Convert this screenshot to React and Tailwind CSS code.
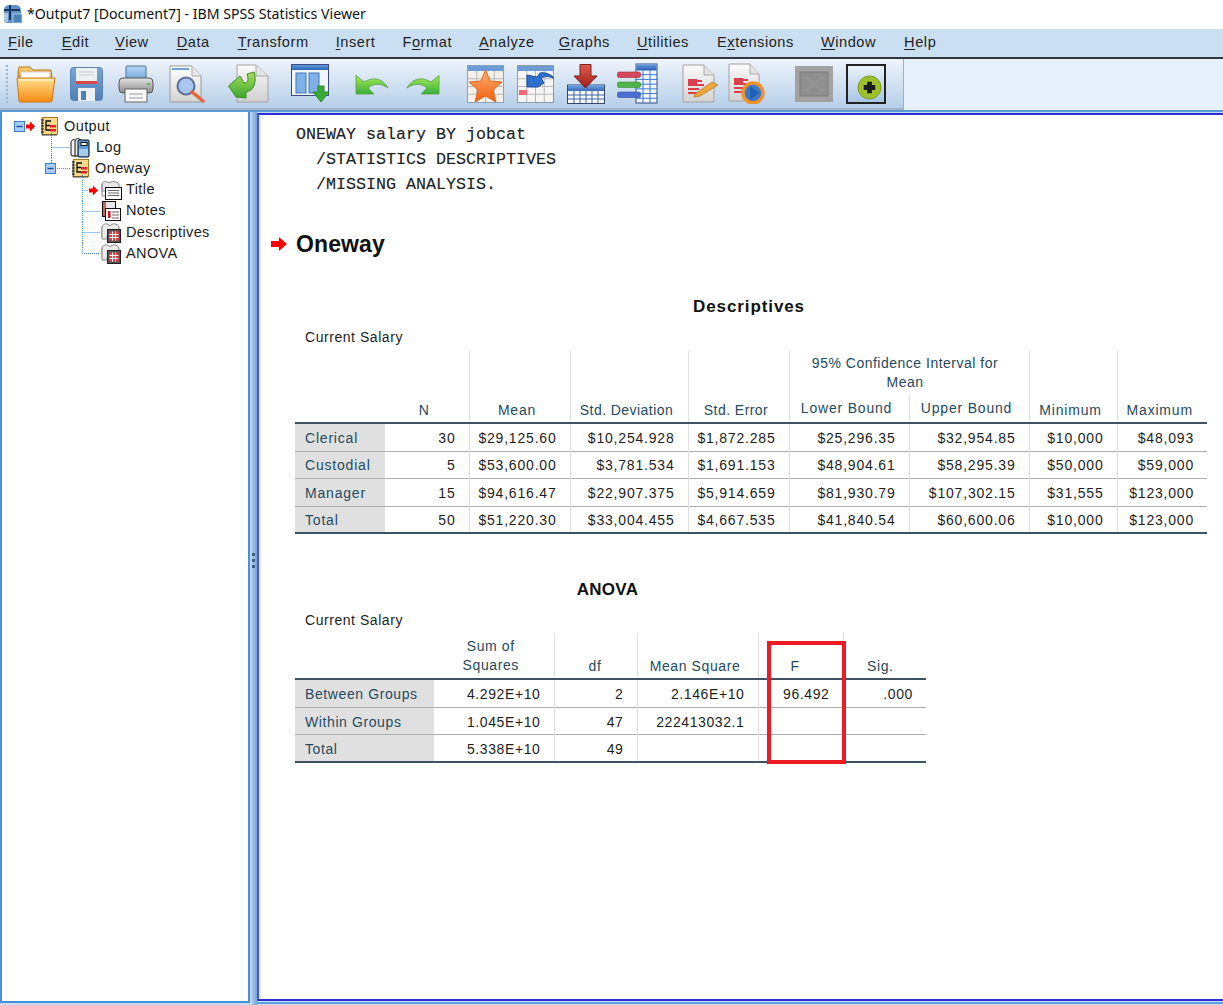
import React from "react";

const Grad = ({ id, a, b, h }) => (
  <linearGradient id={id} x1="0" y1="0" x2={h ? "1" : "0"} y2={h ? "0" : "1"}>
    <stop offset="0" stopColor={a} />
    <stop offset="1" stopColor={b} />
  </linearGradient>
);

const Folder = () => (
  <svg width="40" height="38" viewBox="0 0 40 38" className="shrink-0">
    <defs><Grad id="fo" a="#ffe08a" b="#f58a12" /><Grad id="fb" a="#ffd27a" b="#e89a2c" /></defs>
    <path d="M2 7 L3 2 H14 L17 5 H35 L36 12 H2Z" fill="url(#fb)" stroke="#b87a20" />
    <rect x="5" y="7" width="29" height="8" fill="#fff" stroke="#cfcfcf" />
    <path d="M1 13 H39 L36 36 Q36 37 34 37 H5 Q3 37 3 36Z" fill="url(#fo)" stroke="#c9781a" />
    <path d="M3 15 H37" stroke="#fff2c8" strokeWidth="1.5" />
  </svg>
);
const Floppy = () => (
  <svg width="33" height="34" viewBox="0 0 33 34" className="shrink-0">
    <defs><Grad id="fl" a="#7aa6d8" b="#4f7fb8" /></defs>
    <rect x="0.5" y="0.5" width="32" height="33" rx="3" fill="url(#fl)" stroke="#5b85b5" />
    <rect x="6" y="1" width="21" height="16" fill="#eef1f4" />
    <path d="M9 5 H24 M9 8 H24" stroke="#c7ccd4" />
    <rect x="6" y="14" width="21" height="3" fill="#d84a4a" />
    <rect x="8" y="21" width="17" height="13" fill="#eef1f4" />
    <rect x="11" y="24" width="5" height="9" fill="#4f7fb8" />
  </svg>
);
const Printer = () => (
  <svg width="36" height="38" viewBox="0 0 36 38" className="shrink-0">
    <defs><Grad id="pr" a="#e4e4e4" b="#8a8a8a" /><Grad id="pb" a="#bcd8f4" b="#6fa5dc" /></defs>
    <rect x="8" y="1" width="20" height="14" rx="1" fill="url(#pb)" stroke="#4a6f96" />
    <rect x="1" y="13" width="34" height="15" rx="4" fill="url(#pr)" stroke="#555" />
    <rect x="29" y="18" width="3" height="2" fill="#56c04c" />
    <rect x="7" y="24" width="22" height="13" fill="#f8f8f8" stroke="#666" />
    <path d="M11 29 H25 M11 33 H25" stroke="#9a9a9a" />
  </svg>
);
const Preview = () => (
  <svg width="37" height="38" viewBox="0 0 37 38" className="shrink-0">
    <defs><Grad id="pv" a="#ffffff" b="#d4d4d4" /></defs>
    <path d="M1 1 H23 L32 11 V37 H1Z" fill="url(#pv)" stroke="#9a9a9a" />
    <path d="M23 1 V11 H32" fill="#e8e8e8" stroke="#aaa" />
    <path d="M3 4 H20" stroke="#6f9fd8" strokeWidth="2" />
    <circle cx="17" cy="21" r="8.5" fill="#a9c6ef" stroke="#5d6d96" strokeWidth="2" />
    <path d="M23 27 L34 36" stroke="#e8663c" strokeWidth="3.5" strokeLinecap="round" />
  </svg>
);
const ScriptDoc = () => (
  <svg width="41" height="39" viewBox="0 0 41 39" className="shrink-0">
    <defs><Grad id="sd" a="#fafafa" b="#cfcfcf" /><Grad id="sg" a="#a6e05a" b="#3fa52f" /></defs>
    <path d="M9 1 H28 L40 12 V38 H9Z" fill="url(#sd)" stroke="#a3a3a3" />
    <path d="M28 1 V12 H40" fill="#e5e5e5" stroke="#aaa" />
    <path d="M0.5 22 L12 12 L16 19 C20 19 21 16 19 10 L26 8 C29 18 26 27 18 28 L18 34 L8 33Z" fill="url(#sg)" stroke="#3b8f2d" />
  </svg>
);
const Columns = () => (
  <svg width="39" height="39" viewBox="0 0 39 39" className="shrink-0">
    <defs><Grad id="co" a="#5e9be0" b="#2d63b4" /></defs>
    <rect x="0.5" y="0.5" width="37" height="31" fill="#f2f6fb" stroke="#3a4d78" />
    <rect x="1" y="1" width="36" height="5" fill="url(#co)" />
    <rect x="5" y="9" width="10" height="20" fill="#7fb1e6" stroke="#4178be" />
    <rect x="18" y="9" width="10" height="20" fill="#7fb1e6" stroke="#4178be" />
    <path d="M27 22 H33 V28 H38 L30 38 L22 28 H27Z" fill="#3aaa35" stroke="#2b8a2a" />
  </svg>
);
const Undo = () => (
  <svg width="34" height="20" viewBox="0 0 34 20" className="shrink-0">
    <defs><Grad id="un" a="#a8ea58" b="#36b03a" /></defs>
    <path d="M1 0.5 V19 H19 L13 13 C19 8 26 8 33 13 C28 4 19 1 9 7Z" fill="url(#un)" stroke="#5a9c40" strokeWidth="0.8" />
  </svg>
);
const Redo = () => (
  <svg width="34" height="20" viewBox="0 0 34 20" className="shrink-0">
    <defs><Grad id="re" a="#a8ea58" b="#36b03a" /></defs>
    <path d="M33 0.5 V19 H15 L21 13 C15 8 8 8 1 13 C6 4 15 1 25 7Z" fill="url(#re)" stroke="#5a9c40" strokeWidth="0.8" />
  </svg>
);
const GridLines = ({ x, y, w, h, cols, rows, color = "#b9b9b9" }) => {
  const l = [];
  for (let i = 1; i < cols; i++) l.push(<path key={"c" + i} d={`M${x + (w * i) / cols} ${y} V${y + h}`} stroke={color} />);
  for (let i = 1; i < rows; i++) l.push(<path key={"r" + i} d={`M${x} ${y + (h * i) / rows} H${x + w}`} stroke={color} />);
  return <>{l}</>;
};
const StarTable = () => (
  <svg width="37" height="38" viewBox="0 0 37 38" className="shrink-0">
    <defs><Grad id="st" a="#ffb070" b="#f2600f" /></defs>
    <rect x="0.5" y="0.5" width="36" height="37" fill="#f4f1ea" stroke="#8aa2bb" />
    <rect x="1" y="1" width="35" height="5" fill="#6d9bd6" />
    <GridLines x={1} y={6} w={35} h={31} cols={4} rows={4} />
    <path d="M18.5 5 L23 16 L35 17 L26 25 L29 37 L18.5 31 L8 37 L11 25 L2 17 L14 16Z" fill="url(#st)" stroke="#e06a20" />
  </svg>
);
const ArrowTable = () => (
  <svg width="37" height="38" viewBox="0 0 37 38" className="shrink-0">
    <rect x="0.5" y="0.5" width="36" height="37" fill="#f5f5f5" stroke="#8e9aa8" />
    <rect x="1" y="1" width="35" height="5" fill="#6d9bd6" />
    <GridLines x={1} y={6} w={35} h={31} cols={4} rows={4} />
    <rect x="2" y="25" width="8" height="5" fill="#ee6a78" />
    <path d="M10 22 V10 L20 12 L23 8 C28 7 34 9 38 14 C33 11 28 11 24 13 L27 18 L21 22Z" fill="#2d6fce" stroke="#1e4f9e" />
  </svg>
);
const DownTable = () => (
  <svg width="38" height="40" viewBox="0 0 38 40" className="shrink-0">
    <defs><Grad id="dt" a="#e25a50" b="#9e1d1a" /><Grad id="dh" a="#6fa8e8" b="#3d6bb0" /></defs>
    <rect x="0.5" y="21" width="37" height="18.5" fill="#f6f9fd" stroke="#33466e" />
    <rect x="1" y="21" width="36" height="6" fill="url(#dh)" />
    <GridLines x={1} y={27} w={36} h={12} cols={6} rows={3} color="#3f66a6" />
    <path d="M13 0.5 H24 V12 H30 L18.5 24 L7 12 H13Z" fill="url(#dt)" stroke="#7c2018" />
  </svg>
);
const BarsTable = () => (
  <svg width="41" height="41" viewBox="0 0 41 41" className="shrink-0">
    <defs><Grad id="bt" a="#5e9ae2" b="#2a60b0" /></defs>
    <rect x="19" y="1" width="21" height="39" fill="#f2f6fc" stroke="#2e4f86" />
    <rect x="19.5" y="1.5" width="20" height="6" fill="url(#bt)" />
    <GridLines x={19} y={7} w={21} h={33} cols={3} rows={7} color="#3c7ad0" />
    <rect x="0.5" y="9" width="23" height="5.5" rx="1.5" fill="#d8485a" stroke="#a53040" strokeWidth="0.6" />
    <rect x="0.5" y="19" width="23" height="5.5" rx="1.5" fill="#4fb548" stroke="#378a32" strokeWidth="0.6" />
    <rect x="0.5" y="29" width="23" height="5.5" rx="1.5" fill="#4a6fd0" stroke="#34509e" strokeWidth="0.6" />
  </svg>
);
const DocLines = () => (
  <>
    <path d="M6 17 H20 M6 21 H22 M6 25 H17 M6 29 H20" stroke="#d9404e" strokeWidth="2" />
    <rect x="6" y="15" width="9" height="5" fill="#d9404e" />
  </>
);
const DocPen = () => (
  <svg width="37" height="39" viewBox="0 0 37 39" className="shrink-0">
    <defs><Grad id="dp" a="#fbfbfb" b="#d2d2d2" /></defs>
    <path d="M1 1 H22 L32 11 V38 H1Z" fill="url(#dp)" stroke="#a2a2a2" />
    <path d="M22 1 V11 H32" fill="#e4e4e4" stroke="#aaa" />
    <DocLines />
    <path d="M13 30 L30 18 L36 21 L18 32 L12 33Z" fill="#f2a63a" stroke="#b87a20" strokeWidth="0.8" />
  </svg>
);
const DocPlay = () => (
  <svg width="41" height="41" viewBox="0 0 41 41" className="shrink-0">
    <defs><Grad id="dq" a="#fbfbfb" b="#d2d2d2" /></defs>
    <path d="M1 1 H22 L31 11 V38 H1Z" fill="url(#dq)" stroke="#a2a2a2" />
    <path d="M22 1 V11 H31" fill="#e4e4e4" stroke="#aaa" />
    <DocLines />
    <circle cx="25" cy="30" r="10" fill="#3a78c8" stroke="#f0922a" strokeWidth="3.5" />
    <path d="M22 23 L31 30 L22 37Z" fill="#1f5fb5" />
  </svg>
);
const GreyBox = () => (
  <svg width="38" height="36" viewBox="0 0 38 36" className="shrink-0">
    <rect x="0" y="0" width="38" height="36" fill="#a2a2a2" />
    <rect x="5" y="6" width="28" height="24" fill="#8f8f8f" stroke="#7d7d7d" />
    <path d="M9 10 L29 26 M29 10 L9 26" stroke="#949494" strokeWidth="3" />
  </svg>
);

const Minus = ({ x, y }) => (
  <g>
    <rect x={x + 0.5} y={y + 0.5} width="10" height="10" fill="#a9cdf2" stroke="#3d7cc9" />
    <path d={`M${x + 2.5} ${y + 5.5} H${x + 8.5}`} stroke="#1e4f8f" strokeWidth="1.4" />
  </g>
);
const RedArrow = ({ x, cy }) => (
  <path d={`M${x} ${cy - 2} H${x + 4} V${cy - 5} L${x + 9} ${cy} L${x + 4} ${cy + 5} V${cy + 2} H${x}Z`} fill="#f00" />
);
const dot = { stroke: "#3f8ce0", strokeDasharray: "1 1", fill: "none" };

const Gutter = ({ children }) => (
  <svg width="100" height="21.2" viewBox="0 0 100 21.2" className="absolute left-0 top-0">{children}</svg>
);

const OutIcon = () => (
  <svg width="17" height="19" viewBox="0 0 17 19" className="shrink-0">
    <rect x="1.5" y="0.5" width="15" height="17" fill="#fcd98a" stroke="#a8791f" />
    <path d="M1 2 V18 H16" stroke="#444" fill="none" />
    <path d="M0 3 H3 M0 6 H3 M0 9 H3 M0 12 H3 M0 15 H3" stroke="#222" />
    <path d="M10 4 H5 V13 H10 M5 8.5 H9" stroke="#111" strokeWidth="1.3" fill="none" />
    <rect x="9" y="8" width="6" height="2.5" fill="#e0202a" />
    <rect x="9" y="12" width="6" height="2.5" fill="#e0202a" />
  </svg>
);
const LogIcon = () => (
  <svg width="20" height="20" viewBox="0 0 20 20" className="shrink-0">
    <path d="M1 4 C2 1 5 1 6 3 V18 H3 Q1 18 1 16Z" fill="#f4f4f4" stroke="#111" />
    <path d="M5 3 C6 0 9 0 11 2 V18 H5Z" fill="#e8e8e8" stroke="#111" />
    <rect x="8" y="2" width="11" height="17" rx="1" fill="#5d9bd8" stroke="#111" />
    <rect x="11" y="4.5" width="6" height="3" fill="#fff" stroke="#111" />
    <rect x="9" y="11" width="9" height="7" fill="#a6cdf0" />
  </svg>
);
const TitleIcon = () => (
  <svg width="21" height="19" viewBox="0 0 21 19" className="shrink-0">
    <path d="M1 3 C2 0 6 0 8 2 C10 0 16 0 18 3 V10 H1 Z" fill="#e8e8e8" stroke="#888" />
    <path d="M1 3 V15 H4" fill="none" stroke="#888" />
    <rect x="4.5" y="6.5" width="16" height="12" fill="#fff" stroke="#111" />
    <path d="M7 9.5 H18 M7 12 H18 M7 14.5 H18" stroke="#666" />
  </svg>
);
const NotesIcon = () => (
  <svg width="20" height="20" viewBox="0 0 20 20" className="shrink-0">
    <rect x="1.5" y="0.5" width="13" height="15" fill="#e8e8e8" stroke="#111" />
    <rect x="2" y="1" width="3" height="14" fill="#d9604c" />
    <rect x="4.5" y="7.5" width="15" height="12" fill="#fff" stroke="#111" />
    <rect x="7" y="10" width="2.5" height="7" fill="#e0101a" />
    <path d="M11 11 H18 M11 14 H18 M11 17 H18" stroke="#666" />
  </svg>
);
const TableIcon = () => (
  <svg width="20" height="20" viewBox="0 0 20 20" className="shrink-0">
    <path d="M1 4 C2 0 7 0 9 3 C11 0 16 0 18 4 V14 H1Z" fill="#ececec" stroke="#888" />
    <path d="M1 4 V16 H6" fill="#ececec" stroke="#888" />
    <rect x="6.5" y="6.5" width="13" height="13" fill="#555" stroke="#222" />
    <rect x="8.5" y="8.5" width="9" height="9" fill="#e04040" />
    <path d="M11.5 8.5 V17.5 M14.5 8.5 V17.5 M8.5 11.5 H17.5 M8.5 14.5 H17.5" stroke="#fff" />
  </svg>
);

const TreeRow = ({ pl, gap, icon, label, gutter }) => (
  <div className={`relative flex h-[21.2px] items-center ${gap}`} style={{ paddingLeft: pl }}>
    <Gutter>{gutter}</Gutter>
    {icon}
    <span className="relative text-[14.5px] text-[#1c1c1c]">{label}</span>
  </div>
);

const Tree = () => (
  <div className="pt-[4px] font-['Liberation_Sans',sans-serif] tracking-[0.4px]">
    <TreeRow pl={39} gap="gap-[6px]" icon={<OutIcon />} label="Output"
      gutter={<><Minus x={12} y={5} /><RedArrow x={24} cy={10.5} /><path d="M49.5 17 V21.2" {...dot} /></>} />
    <TreeRow pl={68} gap="gap-[6px]" icon={<LogIcon />} label="Log"
      gutter={<><path d="M49.5 0 V21.2 M49.5 10.5 H68" {...dot} /></>} />
    <TreeRow pl={70} gap="gap-[6px]" icon={<OutIcon />} label="Oneway"
      gutter={<><path d="M49.5 0 V5 M55 10.5 H69 M80.5 17 V21.2" {...dot} /><Minus x={43} y={5} /></>} />
    <TreeRow pl={99} gap="gap-[4px]" icon={<TitleIcon />} label="Title"
      gutter={<><path d="M80.5 0 V21.2 M80.5 10.5 H86" {...dot} /><RedArrow x={87} cy={10.5} /></>} />
    <TreeRow pl={99} gap="gap-[5px]" icon={<NotesIcon />} label="Notes"
      gutter={<path d="M80.5 0 V21.2 M80.5 10.5 H98" {...dot} />} />
    <TreeRow pl={99} gap="gap-[5px]" icon={<TableIcon />} label="Descriptives"
      gutter={<path d="M80.5 0 V21.2 M80.5 10.5 H98" {...dot} />} />
    <TreeRow pl={99} gap="gap-[5px]" icon={<TableIcon />} label="ANOVA"
      gutter={<path d="M80.5 0 V10.5 H98" {...dot} />} />
  </div>
);

const head = "text-[#264a60] font-normal align-bottom text-center pb-[1px]";
const vline = "border-r border-[#e0e0e0]";
const desc = [
  ["Clerical", "30", "$29,125.60", "$10,254.928", "$1,872.285", "$25,296.35", "$32,954.85", "$10,000", "$48,093"],
  ["Custodial", "5", "$53,600.00", "$3,781.534", "$1,691.153", "$48,904.61", "$58,295.39", "$50,000", "$59,000"],
  ["Manager", "15", "$94,616.47", "$22,907.375", "$5,914.659", "$81,930.79", "$107,302.15", "$31,555", "$123,000"],
  ["Total", "50", "$51,220.30", "$33,004.455", "$4,667.535", "$41,840.54", "$60,600.06", "$10,000", "$123,000"],
];
const anova = [
  ["Between Groups", "4.292E+10", "2", "2.146E+10", "96.492", ".000"],
  ["Within Groups", "1.045E+10", "47", "222413032.1", "", ""],
  ["Total", "5.338E+10", "49", "", "", ""],
];

const Body = ({ rows, heights, pad }) => (
  <tbody>
    {rows.map((r, i) => (
      <tr key={r[0]} style={{ height: heights[i] }} className={i === rows.length - 1 ? "border-b-2 border-[#3d5363]" : "border-b border-[#aeaeae]"}>
        {r.map((c, j) =>
          j === 0 ? (
            <td key={j} className={`bg-[#e0e0e0] pl-[10px] ${pad} text-[#264a60]`}>{c}</td>
          ) : (
            <td key={j} className={`${pad} text-right text-[#1e1e1e] ${j < r.length - 1 ? vline : ""}`}>
              <span className="mr-[13px]">{c}</span>
            </td>
          )
        )}
      </tr>
    ))}
  </tbody>
);

const Descriptives = () => (
  <table className="w-[912px] table-fixed border-collapse text-[14px] tracking-[0.8px]">
    <colgroup>
      {[90, 84, 101, 118, 101, 120, 120, 88, 90].map((w, i) => <col key={i} style={{ width: w }} />)}
    </colgroup>
    <thead>
      <tr className="h-[44px]">
        <th rowSpan={2} className={head}></th>
        <th rowSpan={2} className={`${head} pr-[5px] ${vline}`}>N</th>
        <th rowSpan={2} className={`${head} pr-[5px] ${vline}`}>Mean</th>
        <th rowSpan={2} className={`${head} pr-[5px] tracking-[0.45px] ${vline}`}>Std. Deviation</th>
        <th rowSpan={2} className={`${head} pr-[5px] tracking-[0.45px] ${vline}`}>Std. Error</th>
        <th colSpan={2} className={`text-[#264a60] font-normal text-center align-middle leading-[19px] tracking-[0.5px] pl-[16px] pr-[24px] ${vline}`}>95% Confidence Interval for Mean</th>
        <th rowSpan={2} className={`${head} pr-[5px] ${vline}`}>Minimum</th>
        <th rowSpan={2} className={`${head} pr-[5px]`}>Maximum</th>
      </tr>
      <tr className="h-[28px] border-b-2 border-[#3d5363]">
        <th className={`text-[#264a60] font-normal text-center align-bottom pb-[3px] pr-[5px] ${vline}`}>Lower Bound</th>
        <th className={`text-[#264a60] font-normal text-center align-bottom pb-[3px] pr-[5px] ${vline}`}>Upper Bound</th>
      </tr>
    </thead>
    <Body rows={desc} heights={[28, 27, 28, 27]} pad="pt-[2px]" />
  </table>
);

const Anova = () => (
  <div className="relative w-[631px]">
    <table className="w-[631px] table-fixed border-collapse text-[14px] tracking-[0.6px]">
      <colgroup>
        {[139, 120, 83, 121, 85, 83].map((w, i) => <col key={i} style={{ width: w }} />)}
      </colgroup>
      <thead>
        <tr className="h-[46px] border-b-2 border-[#3d5363]">
          <th className={head}></th>
          <th className={`text-[#264a60] font-normal align-bottom text-center pb-[3px] leading-[19px] pl-[24px] pr-[30px] ${vline}`}>Sum of Squares</th>
          <th className={`${head} pr-[1px] ${vline}`}>df</th>
          <th className={`${head} pr-[5px] ${vline}`}>Mean Square</th>
          <th className={`${head} pr-[11px] ${vline}`}>F</th>
          <th className={`${head} pr-[9px]`}>Sig.</th>
        </tr>
      </thead>
      <Body rows={anova} heights={[28, 27, 28]} pad="pt-[3px]" />
    </table>
    <div className="absolute left-[472px] top-[8px] h-[123px] w-[79px] border-[4px] border-[#ed1c24]"></div>
  </div>
);

const Grip = () => (
  <svg width="4" height="40" viewBox="0 0 4 40" className="mr-[8px] shrink-0">
    {[...Array(10)].map((_, i) => (
      <rect key={i} x="1" y={i * 4 + 1} width="2" height="2" fill="#9fb4c8" />
    ))}
  </svg>
);

const Menu = ({ u, pre = "", rest, ml }) => (
  <span className="whitespace-nowrap" style={{ marginLeft: ml }}>
    {pre}<span className="underline underline-offset-2">{u}</span>{rest}
  </span>
);

export default function App() {
  return (
    <div className="flex h-[1005px] w-full flex-col overflow-hidden bg-[#c4daf0] font-['Liberation_Sans',sans-serif]">
      <div className="flex h-[29px] shrink-0 items-center bg-white pl-[3px] pb-[1px]">
        <svg width="20" height="20" viewBox="0 0 20 20" className="shrink-0">
          <path d="M1 6 Q1 1 7 1 H13 Q18 1 18 7 V19 H5 Q1 19 1 15Z" fill="#5f93c8" />
          <rect x="1" y="5" width="16" height="2" fill="#17375e" />
          <rect x="6" y="1" width="2" height="15" fill="#17375e" />
          <rect x="10" y="10" width="9" height="9" fill="#4c82ba" stroke="#cfe0f2" strokeWidth="0.7" />
          <path d="M1 9 H5 V18 Q1 18 1 14Z" fill="#fff" opacity="0.5" />
        </svg>
        <span className="ml-[4px] font-['Noto_Sans',sans-serif] text-[14.15px] text-[#111] whitespace-nowrap">*Output7 [Document7] - IBM SPSS Statistics Viewer</span>
      </div>

      <div className="flex h-[28px] shrink-0 items-center bg-[#cbdff2] text-[14.6px] tracking-[0.55px] text-[#222] pb-[1px]">
        <Menu u="F" rest="ile" ml={8} />
        <Menu u="E" rest="dit" ml={28} />
        <Menu u="V" rest="iew" ml={26} />
        <Menu u="D" rest="ata" ml={28} />
        <Menu u="T" rest="ransform" ml={28} />
        <Menu u="I" rest="nsert" ml={27} />
        <Menu pre="F" u="o" rest="rmat" ml={27} />
        <Menu u="A" rest="nalyze" ml={27} />
        <Menu u="G" rest="raphs" ml={24} />
        <Menu u="U" rest="tilities" ml={27} />
        <Menu pre="E" u="x" rest="tensions" ml={28} />
        <Menu u="W" rest="indow" ml={27} />
        <Menu u="H" rest="elp" ml={28} />
      </div>

      <div className="flex h-[55px] shrink-0 border-t-2 border-b-2 border-t-[#33373d] border-b-[#5b9bd5] bg-[#e6f0fb]">
        <div className="flex h-[51px] w-[904px] shrink-0 items-center border-r border-[#9fb0c2] border-b-2 border-b-[#a4b5c7] bg-gradient-to-b from-[#eef4fc] to-[#b6cfe8] pl-[5px]">
          <Grip />
          <span className="ml-[-1px] flex items-center"><Folder /></span>
          <span className="ml-[14px] flex"><Floppy /></span>
          <span className="ml-[15px] flex"><Printer /></span>
          <span className="ml-[15px] flex"><Preview /></span>
          <span className="ml-[22px] flex"><ScriptDoc /></span>
          <span className="ml-[22px] flex"><Columns /></span>
          <span className="ml-[25px] mt-[3px] flex"><Undo /></span>
          <span className="ml-[17px] mt-[3px] flex"><Redo /></span>
          <span className="ml-[27px] flex"><StarTable /></span>
          <span className="ml-[13px] flex"><ArrowTable /></span>
          <span className="ml-[13px] flex"><DownTable /></span>
          <span className="ml-[12px] flex"><BarsTable /></span>
          <span className="ml-[24px] flex"><DocPen /></span>
          <span className="ml-[9px] flex"><DocPlay /></span>
          <span className="ml-[26px] flex"><GreyBox /></span>
          <div className="ml-[13px] flex h-[40px] w-[40px] shrink-0 items-end justify-end border-2 border-[#222] bg-gradient-to-b from-[#eaf2fb] to-[#a9c6e4] p-[2px]">
            <svg width="25" height="25" viewBox="0 0 26 26">
              <circle cx="13" cy="13" r="12" fill="#9dc02e" stroke="#7a9a24" />
              <path d="M10.5 7 H15.5 V10.5 H19 V15.5 H15.5 V19 H10.5 V15.5 H7 V10.5 H10.5Z" fill="#1a1a1a" />
            </svg>
          </div>
        </div>
      </div>

      <div className="flex min-h-0 flex-1">
        <div className="mb-[2px] w-[250px] shrink-0 border-2 border-t-0 border-[#4a90d9] bg-white">
          <Tree />
        </div>
        <div className="flex w-[7px] shrink-0 flex-col items-center justify-center bg-gradient-to-r from-[#c4daf0] to-[#6fa3d6] pt-[6px]">
          {[0, 1, 2].map((i) => (
            <div key={i} className="mb-[3px] h-[3px] w-[3px] bg-[#44607f]"></div>
          ))}
        </div>
        <div className="mb-[1px] flex min-w-0 flex-1 flex-col border-b-2 border-[#5fa0e0] pt-[1px] pb-[1px]">
          <div className="min-h-0 flex-1 border-t-2 border-b-2 border-l-2 border-t-[#2c30d6] border-b-[#2c30d6] border-l-[#4b55cf] bg-white">
            <div className="h-full border-l-2 border-[#dfe8fb] pl-[35px]">
              <div className="pt-[7px] font-['Liberation_Mono',monospace] text-[16.67px] leading-[25px] text-[#222] whitespace-pre [-webkit-text-stroke:0.15px_#222]">
                <div>ONEWAY salary BY jobcat</div>
                <div>  /STATISTICS DESCRIPTIVES</div>
                <div>  /MISSING ANALYSIS.</div>
              </div>

              <div className="mt-[32px] ml-[-25px] flex h-[30px] items-center">
                <svg width="16" height="14" viewBox="0 0 16 14" className="shrink-0">
                  <path d="M0 4 H8 V0 L16 7 L8 14 V10 H0Z" fill="#f00" />
                </svg>
                <h1 className="ml-[9px] text-[23px] font-bold tracking-[0.1px] text-[#111]">Oneway</h1>
              </div>

              <div className="ml-[-1px] w-[912px] text-[14px]">
                <div className="mt-[36px] h-[24px] pr-1 text-center text-[17px] font-bold leading-[24px] tracking-[0.9px] text-[#111]">Descriptives</div>
                <div className="mt-[8px] mb-[4px] ml-[10px] h-[20px] leading-[20px] tracking-[0.55px] text-[#1e1e1e]">Current Salary</div>
                <Descriptives />
              </div>

              <div className="ml-[-1px] w-[631px] text-[14px]">
                <div className="mt-[44px] h-[24px] pr-[6px] text-center text-[17px] font-bold leading-[24px] tracking-[0.3px] text-[#111]">ANOVA</div>
                <div className="mt-[8px] mb-[3px] ml-[10px] h-[20px] leading-[20px] tracking-[0.55px] text-[#1e1e1e]">Current Salary</div>
                <Anova />
              </div>
            </div>
          </div>
        </div>
      </div>
    </div>
  );
}
